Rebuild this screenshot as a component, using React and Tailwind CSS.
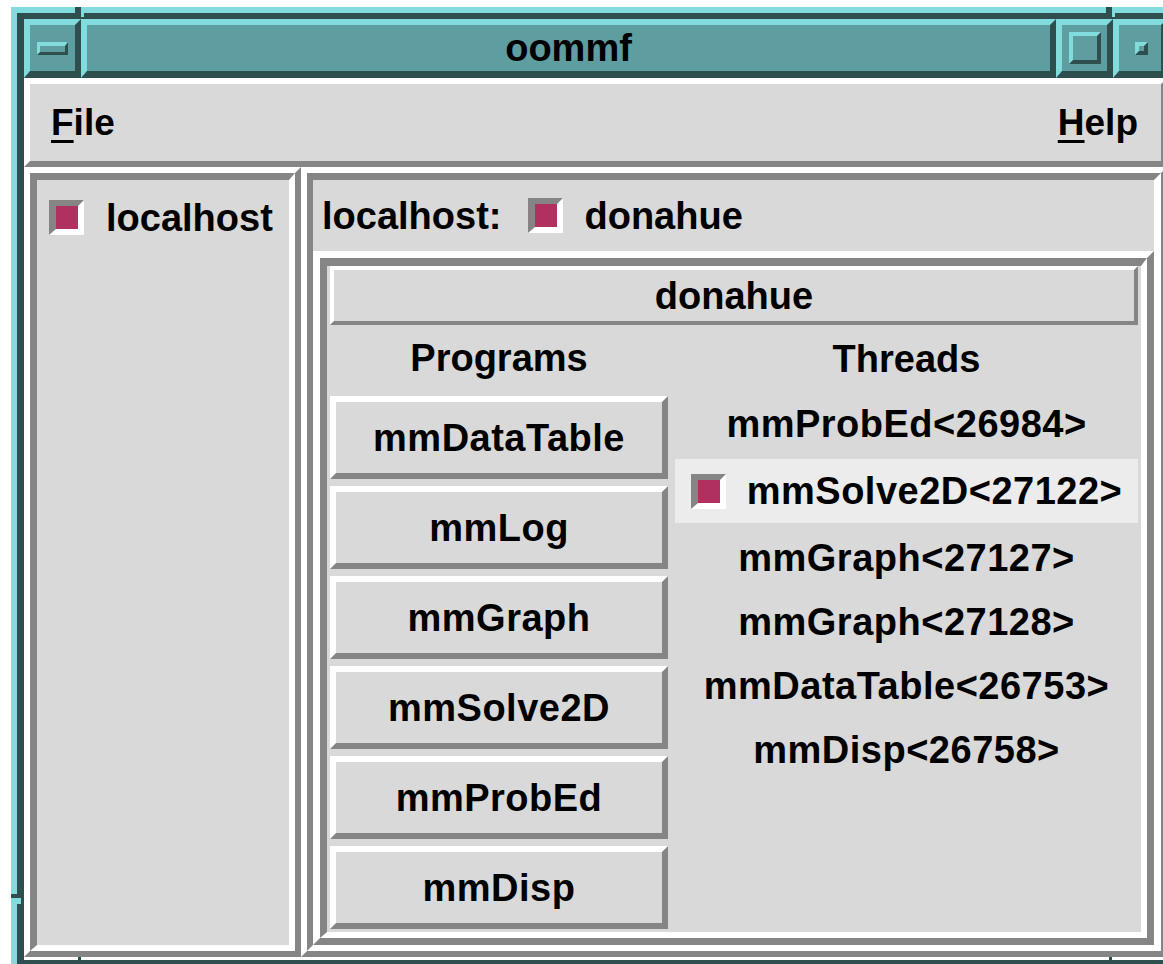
// oommf launcher window, drawn as a Motif-style frame
const RAISED = "border-t-white border-l-white border-r-[#858585] border-b-[#858585]";
const SUNKEN = "border-t-[#858585] border-l-[#858585] border-r-white border-b-white";
const TITLE_BEVEL =
  "border-t-[6px] border-l-[6px] border-b-[7px] border-r-[6px] border-t-[#82dbdd] border-l-[#82dbdd] border-b-[#2f4f4f] border-r-[#2f4f4f] bg-[#5f9ea0]";

const programs = ["mmDataTable", "mmLog", "mmGraph", "mmSolve2D", "mmProbEd", "mmDisp"];
const threads = [
  { name: "mmProbEd<26984>" },
  { name: "mmSolve2D<27122>", selected: true },
  { name: "mmGraph<27127>" },
  { name: "mmGraph<27128>" },
  { name: "mmDataTable<26753>" },
  { name: "mmDisp<26758>" },
];

function Check() {
  return (
    <span className={`block w-[35px] h-[35px] shrink-0 border-t-[6px] border-l-[7px] border-b-[6px] border-r-[6px] ${SUNKEN} bg-[#b03060]`} />
  );
}

function FrameMarks() {
  // little resize-handle ticks on the window border
  return (
    <>
      <span className="absolute left-[75px] top-[7px] w-[6px] h-[12px] bg-[#2f4f4f]" />
      <span className="absolute left-[81px] top-[13px] w-[3px] h-[4px] bg-[#82dbdd]" />
      <span className="absolute left-[1106px] top-[7px] w-[6px] h-[12px] bg-[#2f4f4f]" />
      <span className="absolute left-[1112px] top-[13px] w-[3px] h-[4px] bg-[#82dbdd]" />
      <span className="absolute left-[11px] top-[894px] w-[13px] h-[4px] bg-[#2f4f4f]" />
      <span className="absolute left-[17px] top-[898px] w-[4px] h-[6px] bg-[#82dbdd]" />
      <span className="absolute left-[78px] top-[957px] w-[3px] h-[7px] bg-[#2f4f4f]" />
      <span className="absolute left-[1109px] top-[957px] w-[3px] h-[7px] bg-[#2f4f4f]" />
    </>
  );
}

export default function App() {
  return (
    <div className="relative w-[1163px] h-[964px] overflow-hidden bg-white pl-[11px] pt-[7px] font-['Liberation_Sans',Arial,sans-serif] font-bold text-black">
      <div className="w-[1168px] h-[963px] border-[6px] border-[#82dbdd]">
        <div className="border-t-[6px] border-l-[7px] border-b-[4px] border-r-[6px] border-[#2f4f4f] h-full flex flex-col">
          {/* title bar */}
          <div className="flex h-[59px] shrink-0">
            <div className={`w-[57px] ${TITLE_BEVEL} flex items-center justify-center`}>
              <span className="block w-[31px] h-[13px] border-t-[4px] border-l-[3px] border-b-[3px] border-r-[3px] border-t-[#82dbdd] border-l-[#82dbdd] border-b-[#2f4f4f] border-r-[#2f4f4f]" />
            </div>
            <div className={`flex-1 ${TITLE_BEVEL} flex items-center justify-center text-[38px] leading-none`}>
              oommf
            </div>
            <div className={`w-[57px] ${TITLE_BEVEL} flex items-center justify-center`}>
              <span className="block w-[32px] h-[32px] border-t-[4px] border-l-[4px] border-b-[4px] border-r-[4px] border-t-[#82dbdd] border-l-[#82dbdd] border-b-[#2f4f4f] border-r-[#2f4f4f]" />
            </div>
            <div className={`w-[54px] ${TITLE_BEVEL} flex items-center pl-[16px]`}>
              <span className="block w-[13px] h-[13px] border-t-[4px] border-l-[4px] border-b-[4px] border-r-[4px] border-t-[#82dbdd] border-l-[#82dbdd] border-b-[#2f4f4f] border-r-[#2f4f4f]" />
            </div>
          </div>

          {/* menu bar */}
          <div className={`h-[89px] shrink-0 border-[6px] ${RAISED} bg-[#d9d9d9] flex items-center justify-between pl-[21px] pr-[23px] text-[37px] leading-none`}>
            <span>
              <span className="underline decoration-[3px] underline-offset-[5px]">F</span>ile
            </span>
            <span>
              <span className="underline decoration-[3px] underline-offset-[5px]">H</span>elp
            </span>
          </div>

          {/* panes */}
          <div className="flex h-[790px] shrink-0 text-[38px] leading-none">
            {/* host list */}
            <div className={`w-[277px] border-[6px] ${RAISED} bg-[#d9d9d9] flex`}>
              <div className={`flex-1 border-t-[7px] border-l-[7px] border-b-[6px] border-r-[6px] ${SUNKEN} bg-[#d9d9d9] pt-[20px] pl-[12px]`}>
                <div className="flex items-center gap-[22px] h-[35px]">
                  <Check />
                  <span>localhost</span>
                </div>
              </div>
            </div>

            {/* host detail */}
            <div className={`flex-1 border-[6px] ${RAISED} bg-[#d9d9d9] flex`}>
              <div className={`flex-1 flex flex-col border-t-[7px] border-l-[6px] border-b-[6px] border-r-[7px] ${SUNKEN} bg-[#d9d9d9]`}>
                <div className="h-[71px] shrink-0 flex items-center pl-[9px]">
                  <span>localhost:</span>
                  <span className="ml-[27px]">
                    <Check />
                  </span>
                  <span className="ml-[21px]">donahue</span>
                </div>

                {/* account frame */}
                <div className={`flex-1 flex border-[7px] ${RAISED}`}>
                  <div className={`flex-1 flex flex-col border-t-[8px] border-l-[7px] border-b-[6px] border-r-[6px] ${SUNKEN} px-[3px]`}>
                    <div className={`h-[59px] shrink-0 border-[4px] ${RAISED} flex items-center justify-center`}>
                      donahue
                    </div>
                    <div className="grid grid-cols-[338px_463px] gap-x-[7px] tracking-[0.5px]">
                      <div className="flex flex-col">
                        <div className="h-[66px] flex items-center justify-center tracking-normal">Programs</div>
                        <div className="mt-[5px] flex flex-col gap-[7px]">
                          {programs.map((p) => (
                            <div key={p} className={`h-[83px] border-[6px] ${RAISED} flex items-center justify-center`}>
                              {p}
                            </div>
                          ))}
                        </div>
                      </div>
                      <div className="flex flex-col">
                        <div className="h-[67px] flex items-center justify-center tracking-normal">Threads</div>
                        {threads.map((t) =>
                          t.selected ? (
                            <div key={t.name} className="h-[64px] my-[3px] bg-[#ececec] flex items-center justify-center gap-[21px]">
                              <Check />
                              <span>{t.name}</span>
                            </div>
                          ) : (
                            <div key={t.name} className="h-[64px] flex items-center justify-center">
                              {t.name}
                            </div>
                          )
                        )}
                      </div>
                    </div>
                  </div>
                </div>
              </div>
            </div>
          </div>
        </div>
      </div>
      <FrameMarks />
    </div>
  );
}
